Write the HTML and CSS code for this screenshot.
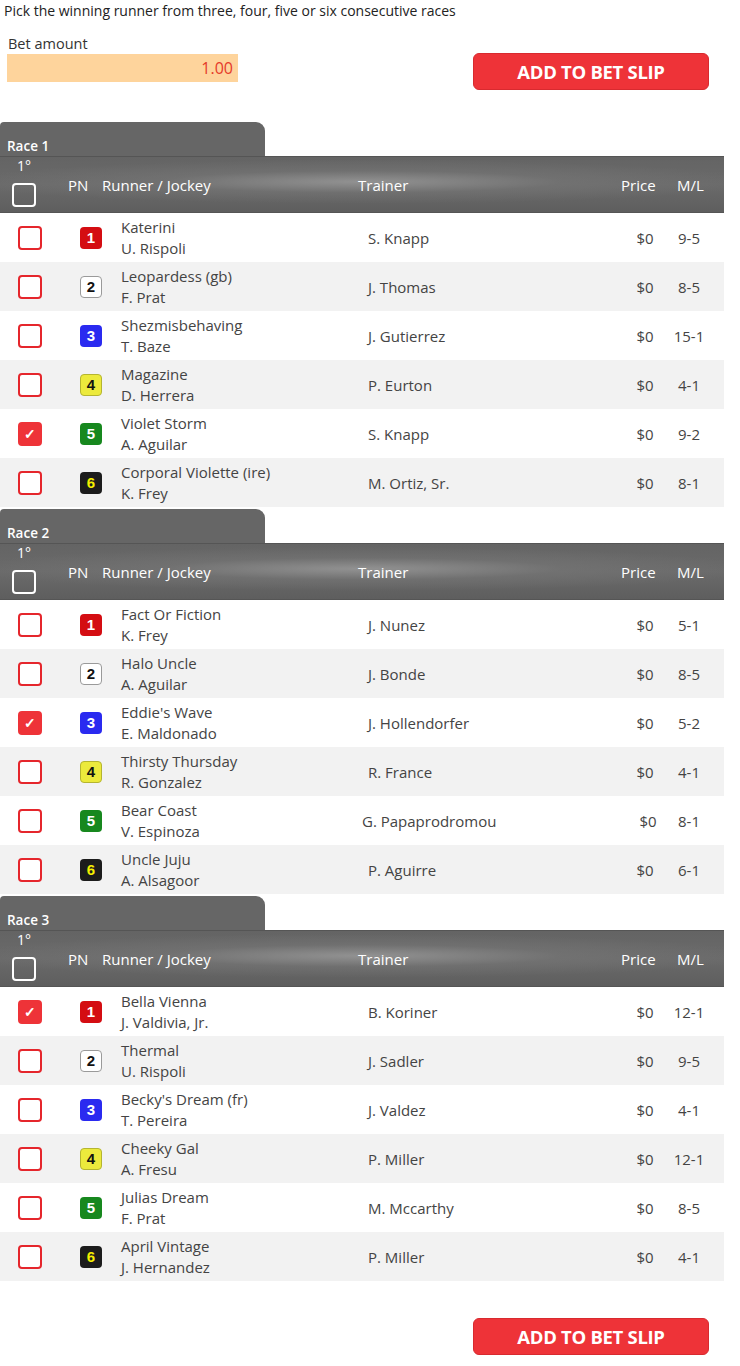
FILE: index.html
```html
<!DOCTYPE html>
<html>
<head>
<meta charset="utf-8">
<link rel="stylesheet" href="styles.css">
</head>
<body>
<p class="intro">Pick the winning runner from three, four, five or six consecutive races</p>
<div class="bet-row">
  <div class="bet-amount">
    <label class="bet-label">Bet amount</label>
    <div class="bet-input">1.00</div>
  </div>
  <button class="btn-add">ADD TO BET SLIP</button>
</div>

<div class="races">
  <section class="race">
    <div class="race-tab">Race 1</div>
    <div class="race-head">
      <div class="h-check"><span class="pos">1°</span><span class="hbox"></span></div>
      <div class="h-pn">PN</div>
      <div class="h-runner">Runner / Jockey</div>
      <div class="h-trainer">Trainer</div>
      <div class="h-price">Price</div>
      <div class="h-ml">M/L</div>
    </div>
    <div class="row"><div class="c-check"><span class="box"></span></div><div class="c-pn"><span class="badge b1">1</span></div><div class="c-runner"><div>Katerini</div><div>U. Rispoli</div></div><div class="c-trainer">S. Knapp</div><div class="c-price">$0</div><div class="c-ml">9-5</div></div>
    <div class="row"><div class="c-check"><span class="box"></span></div><div class="c-pn"><span class="badge b2">2</span></div><div class="c-runner"><div>Leopardess (gb)</div><div>F. Prat</div></div><div class="c-trainer">J. Thomas</div><div class="c-price">$0</div><div class="c-ml">8-5</div></div>
    <div class="row"><div class="c-check"><span class="box"></span></div><div class="c-pn"><span class="badge b3">3</span></div><div class="c-runner"><div>Shezmisbehaving</div><div>T. Baze</div></div><div class="c-trainer">J. Gutierrez</div><div class="c-price">$0</div><div class="c-ml">15-1</div></div>
    <div class="row"><div class="c-check"><span class="box"></span></div><div class="c-pn"><span class="badge b4">4</span></div><div class="c-runner"><div>Magazine</div><div>D. Herrera</div></div><div class="c-trainer">P. Eurton</div><div class="c-price">$0</div><div class="c-ml">4-1</div></div>
    <div class="row"><div class="c-check"><span class="box checked">✓</span></div><div class="c-pn"><span class="badge b5">5</span></div><div class="c-runner"><div>Violet Storm</div><div>A. Aguilar</div></div><div class="c-trainer">S. Knapp</div><div class="c-price">$0</div><div class="c-ml">9-2</div></div>
    <div class="row"><div class="c-check"><span class="box"></span></div><div class="c-pn"><span class="badge b6">6</span></div><div class="c-runner"><div>Corporal Violette (ire)</div><div>K. Frey</div></div><div class="c-trainer">M. Ortiz, Sr.</div><div class="c-price">$0</div><div class="c-ml">8-1</div></div>
  </section>

  <section class="race">
    <div class="race-tab">Race 2</div>
    <div class="race-head">
      <div class="h-check"><span class="pos">1°</span><span class="hbox"></span></div>
      <div class="h-pn">PN</div>
      <div class="h-runner">Runner / Jockey</div>
      <div class="h-trainer">Trainer</div>
      <div class="h-price">Price</div>
      <div class="h-ml">M/L</div>
    </div>
    <div class="row"><div class="c-check"><span class="box"></span></div><div class="c-pn"><span class="badge b1">1</span></div><div class="c-runner"><div>Fact Or Fiction</div><div>K. Frey</div></div><div class="c-trainer">J. Nunez</div><div class="c-price">$0</div><div class="c-ml">5-1</div></div>
    <div class="row"><div class="c-check"><span class="box"></span></div><div class="c-pn"><span class="badge b2">2</span></div><div class="c-runner"><div>Halo Uncle</div><div>A. Aguilar</div></div><div class="c-trainer">J. Bonde</div><div class="c-price">$0</div><div class="c-ml">8-5</div></div>
    <div class="row"><div class="c-check"><span class="box checked">✓</span></div><div class="c-pn"><span class="badge b3">3</span></div><div class="c-runner"><div>Eddie's Wave</div><div>E. Maldonado</div></div><div class="c-trainer">J. Hollendorfer</div><div class="c-price">$0</div><div class="c-ml">5-2</div></div>
    <div class="row"><div class="c-check"><span class="box"></span></div><div class="c-pn"><span class="badge b4">4</span></div><div class="c-runner"><div>Thirsty Thursday</div><div>R. Gonzalez</div></div><div class="c-trainer">R. France</div><div class="c-price">$0</div><div class="c-ml">4-1</div></div>
    <div class="row"><div class="c-check"><span class="box"></span></div><div class="c-pn"><span class="badge b5">5</span></div><div class="c-runner"><div>Bear Coast</div><div>V. Espinoza</div></div><div class="c-trainer wide">G. Papaprodromou</div><div class="c-price shift">$0</div><div class="c-ml">8-1</div></div>
    <div class="row"><div class="c-check"><span class="box"></span></div><div class="c-pn"><span class="badge b6">6</span></div><div class="c-runner"><div>Uncle Juju</div><div>A. Alsagoor</div></div><div class="c-trainer">P. Aguirre</div><div class="c-price">$0</div><div class="c-ml">6-1</div></div>
  </section>

  <section class="race">
    <div class="race-tab">Race 3</div>
    <div class="race-head">
      <div class="h-check"><span class="pos">1°</span><span class="hbox"></span></div>
      <div class="h-pn">PN</div>
      <div class="h-runner">Runner / Jockey</div>
      <div class="h-trainer">Trainer</div>
      <div class="h-price">Price</div>
      <div class="h-ml">M/L</div>
    </div>
    <div class="row"><div class="c-check"><span class="box checked">✓</span></div><div class="c-pn"><span class="badge b1">1</span></div><div class="c-runner"><div>Bella Vienna</div><div>J. Valdivia, Jr.</div></div><div class="c-trainer">B. Koriner</div><div class="c-price">$0</div><div class="c-ml">12-1</div></div>
    <div class="row"><div class="c-check"><span class="box"></span></div><div class="c-pn"><span class="badge b2">2</span></div><div class="c-runner"><div>Thermal</div><div>U. Rispoli</div></div><div class="c-trainer">J. Sadler</div><div class="c-price">$0</div><div class="c-ml">9-5</div></div>
    <div class="row"><div class="c-check"><span class="box"></span></div><div class="c-pn"><span class="badge b3">3</span></div><div class="c-runner"><div>Becky's Dream (fr)</div><div>T. Pereira</div></div><div class="c-trainer">J. Valdez</div><div class="c-price">$0</div><div class="c-ml">4-1</div></div>
    <div class="row"><div class="c-check"><span class="box"></span></div><div class="c-pn"><span class="badge b4">4</span></div><div class="c-runner"><div>Cheeky Gal</div><div>A. Fresu</div></div><div class="c-trainer">P. Miller</div><div class="c-price">$0</div><div class="c-ml">12-1</div></div>
    <div class="row"><div class="c-check"><span class="box"></span></div><div class="c-pn"><span class="badge b5">5</span></div><div class="c-runner"><div>Julias Dream</div><div>F. Prat</div></div><div class="c-trainer">M. Mccarthy</div><div class="c-price">$0</div><div class="c-ml">8-5</div></div>
    <div class="row"><div class="c-check"><span class="box"></span></div><div class="c-pn"><span class="badge b6">6</span></div><div class="c-runner"><div>April Vintage</div><div>J. Hernandez</div></div><div class="c-trainer">P. Miller</div><div class="c-price">$0</div><div class="c-ml">4-1</div></div>
  </section>
</div>

<div class="bottom-row">
  <button class="btn-add">ADD TO BET SLIP</button>
</div>
</body>
</html>
```

FILE: styles.css
```css
* { box-sizing: border-box; }
html, body { margin: 0; padding: 0; background: #fff; }
body {
  font-family: "Open Sans", "Noto Sans", sans-serif;
  color: #444;
  font-size: 14px;
  width: 740px;
}
.intro {
  margin: 0;
  padding: 1px 4px 0;
  font-size: 14px;
  line-height: 20px;
  color: #222;
}
.bet-row {
  display: flex;
  justify-content: space-between;
  align-items: flex-start;
  padding: 13px 31px 0 7px;
}
.bet-label {
  display: block;
  font-size: 14.5px;
  line-height: 20px;
  color: #333;
  padding-left: 1px;
}
.bet-input {
  width: 231px;
  height: 28px;
  background: #fed49c;
  color: #e53a2a;
  font-size: 16px;
  line-height: 28px;
  text-align: right;
  padding-right: 5px;
}
.btn-add {
  width: 236px;
  height: 37px;
  margin-top: 19px;
  background: #ee3338;
  border: 1px solid #d82a2f;
  border-radius: 6px;
  color: #fff;
  font-family: "Open Sans", "Noto Sans", sans-serif;
  font-weight: 700;
  font-size: 18.5px;
  letter-spacing: -0.3px;
  padding: 0;
  cursor: pointer;
}
.races {
  margin-top: 32px;
  width: 724px;
}
.race { margin-bottom: 2px; }
.race-tab {
  width: 265px;
  height: 34px;
  background: #666;
  border-radius: 4px 9px 0 0;
  color: #fff;
  font-size: 13.5px;
  font-weight: 600;
  line-height: 16px;
  padding: 16px 0 0 7px;
}
.race-head {
  height: 57px;
  display: flex;
  align-items: center;
  color: #fff;
  font-size: 15px;
  background:
    radial-gradient(ellipse 55% 40% at 50% 45%, rgba(150,150,150,0.9) 0%, rgba(120,120,120,0.5) 50%, rgba(102,102,102,0) 100%),
    linear-gradient(#646464, #6a6a6a 50%, #5e5e5e);
  border-top: 1px solid #555;
  border-bottom: 1px solid #555;
}
.h-check {
  width: 48px;
  align-self: flex-start;
  display: flex;
  flex-direction: column;
  align-items: center;
}
.pos {
  font-size: 14px;
  line-height: 18px;
}
.hbox {
  margin-top: 8px;
  width: 24px;
  height: 24px;
  border: 2px solid #fff;
  border-radius: 4px;
  background: transparent;
}
.h-pn { width: 54px; padding-left: 20px; }
.h-runner { width: 256px; }
.h-trainer { width: 263px; }
.h-price { width: 56px; }
.h-ml { width: 47px; }

.row {
  height: 49px;
  display: flex;
  align-items: center;
  background: #fff;
}
.row:nth-of-type(even) { background: #f2f2f2; }
.c-check { width: 60px; padding-left: 18px; display: flex; }
.box {
  width: 24px;
  height: 24px;
  border: 2px solid #e5262c;
  border-radius: 4px;
  background: #fff;
  display: flex;
  align-items: center;
  justify-content: center;
  color: #fff;
  font-size: 14px;
  font-weight: 700;
  line-height: 1;
}
.box.checked { background: #ee3338; border-color: #ee3338; }
.c-pn { width: 61px; padding-left: 20px; display: flex; }
.badge {
  width: 22px;
  height: 22px;
  border-radius: 4px;
  display: flex;
  align-items: center;
  justify-content: center;
  font-family: "Liberation Sans", Arial, sans-serif;
  font-weight: 700;
  font-size: 15px;
}
.b1 { background: #d40d12; color: #fff; }
.b2 { background: #fff; color: #111; border: 1px solid #9a9a9a; }
.b3 { background: #2a2af0; color: #fff; }
.b4 { background: #ecea3c; color: #111; border: 1px solid #b5b530; }
.b5 { background: #17881e; color: #fff; }
.b6 { background: #1c1c1c; color: #f5f000; }
.c-runner {
  width: 247px;
  font-size: 15px;
  line-height: 21px;
  color: #444;
}
.c-trainer { width: 252px; font-size: 15px; }
.c-trainer.wide { margin-left: -6px; width: 258px; }
.c-price { width: 48px; text-align: center; font-size: 15px; padding-left: 2px; }
.c-price.shift { padding-left: 8px; }
.c-ml { width: 42px; text-align: center; font-size: 15px; }

.bottom-row {
  display: flex;
  justify-content: flex-end;
  padding: 16px 31px 0 0;
}
```
